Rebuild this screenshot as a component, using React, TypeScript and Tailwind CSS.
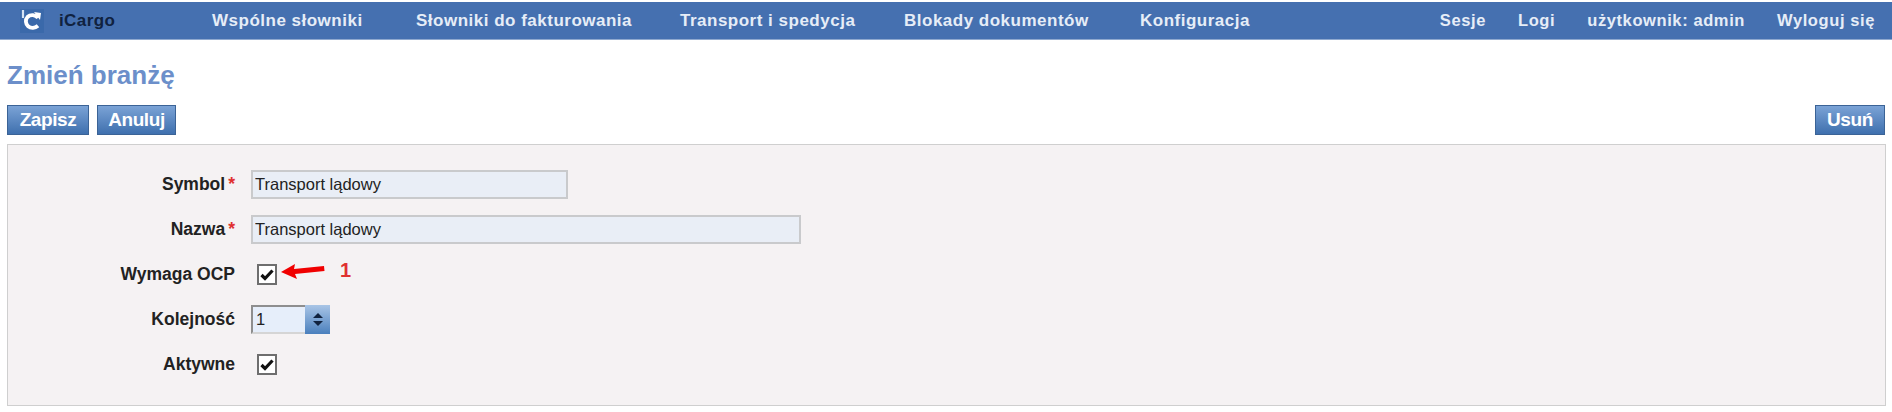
import React from 'react';

const navLeft = [
  { label: 'Wspólne słowniki', width: 'w-[204px]' },
  { label: 'Słowniki do fakturowania', width: 'w-[264px]' },
  { label: 'Transport i spedycja', width: 'w-[224px]' },
  { label: 'Blokady dokumentów', width: 'w-[236px]' },
  { label: 'Konfiguracja', width: 'w-auto' },
];

const Logo = () => (
  <svg width="24" height="24" viewBox="0 0 24 24" className="shrink-0">
    <rect width="24" height="24" fill="#3a69aa" />
    <path d="M3 1v8" stroke="#d6e4f4" strokeWidth="2.200" />
    <path d="M18 9A7 7 0 0 0 7.500 8c-2.400 2.600-2 7 .6 9.200 2.800 2.300 7 2 9.900-.5" fill="none" stroke="#fff" strokeWidth="3.800" />
    <path d="M14 3l7 1-1 7z" fill="#fff" />
  </svg>
);

const Button = ({ label, width }: { label: string; width: string }) => (
  <button className={`${width} h-[30px] border border-[#3b6396] bg-gradient-to-b from-[#7ba3d6] to-[#3f70ae] text-[19px] font-bold tracking-[-0.4px] text-white`}>
    {label}
  </button>
);

const Row = ({ label, required, children }: { label: string; required?: boolean; children: React.ReactNode }) => (
  <div className="flex h-[29px] items-center gap-[16px]">
    <label className="w-[227px] shrink-0 text-right text-[17.500px] font-bold whitespace-nowrap text-[#222]">
      {label}
      {required && <span className="ml-[3px] text-[#e03030]">*</span>}
    </label>
    {children}
  </div>
);

const TextInput = ({ value, width }: { value: string; width: string }) => (
  <input
    readOnly
    value={value}
    className={`${width} h-[29px] border-2 border-[#c9cacc] bg-[#e9eef6] px-[2px] text-[16.500px] text-[#222]`}
  />
);

const Check = () => (
  <span className="ml-[6px] flex h-[21px] w-[20px] shrink-0 items-center justify-center border-2 border-[#6e6e6e] bg-white">
    <svg width="14" height="12" viewBox="0 0 14 12">
      <path d="M1.500 6 5 9.500l7.500-8" fill="none" stroke="#111" strokeWidth="3.200" />
    </svg>
  </span>
);

export default function App() {
  return (
    <div className="h-[412px] overflow-hidden bg-white font-['Liberation_Sans',Arial,sans-serif]">
      <nav className="mt-[2px] flex h-[38px] items-center border-b border-[#8fa9cf] bg-[#4570b0] pl-[20px] pr-[17px] text-[17px] font-bold tracking-[0.5px] text-[#e6edf7]">
        <Logo />
        <span className="ml-[15px] w-[153px] tracking-[0.4px] text-[#10223f]">iCargo</span>
        {navLeft.map((item) => (
          <a key={item.label} className={`${item.width} whitespace-nowrap`}>
            {item.label}
          </a>
        ))}
        <div className="ml-auto flex gap-[32px] text-[16.500px] tracking-[0.6px]">
          <a>Sesje</a>
          <a>Logi</a>
          <a>użytkownik: admin</a>
          <a>Wyloguj się</a>
        </div>
      </nav>

      <div className="px-[6px]">
        <h1 className="mt-[20px] ml-[1px] text-[26px] font-bold leading-[30px] text-[#6c8fca]">Zmień branżę</h1>

        <div className="mt-[15px] flex gap-[8px] px-[1px]">
          <Button label="Zapisz" width="w-[82px]" />
          <Button label="Anuluj" width="w-[79px]" />
          <div className="ml-auto">
            <Button label="Usuń" width="w-[70px]" />
          </div>
        </div>

        <div className="mt-[9px] ml-[1px] h-[262px] border border-[#cfcfcf] bg-[#f5f2f3] pt-[25px]">
          <div className="flex flex-col gap-[16px]">
            <Row label="Symbol" required>
              <TextInput value="Transport lądowy" width="w-[317px]" />
            </Row>
            <Row label="Nazwa" required>
              <TextInput value="Transport lądowy" width="w-[550px]" />
            </Row>
            <Row label="Wymaga OCP">
              <Check />
              <div className="-mt-[6px] -ml-[13px] flex items-center">
                <svg width="46" height="17" viewBox="0 0 46 17">
                  <path d="M1 9 15 1l-1 5 30-3 .5 5L15 11l2 5z" fill="#f00000" />
                </svg>
                <span className="-mt-[4px] ml-[14px] text-[20px] leading-none font-bold text-[#e03030]">1</span>
              </div>
            </Row>
            <Row label="Kolejność">
              <div className="flex h-[29px]">
                <input
                  readOnly
                  value="1"
                  className="h-[29px] w-[54px] border-2 border-r-0 border-[#8e8e8e] border-b-[#d5d5d5] bg-[#e6eefa] px-[3px] text-[16.500px] text-[#222]"
                />
                <span className="flex w-[25px] flex-col items-center justify-center gap-[3px] bg-gradient-to-b from-[#a9c5e6] to-[#4a80bd]">
                  <span className="h-0 w-0 border-x-[5px] border-b-[5px] border-x-transparent border-b-[#10223f]" />
                  <span className="h-0 w-0 border-x-[5px] border-t-[5px] border-x-transparent border-t-[#10223f]" />
                </span>
              </div>
            </Row>
            <Row label="Aktywne">
              <Check />
            </Row>
          </div>
        </div>
      </div>
    </div>
  );
}
